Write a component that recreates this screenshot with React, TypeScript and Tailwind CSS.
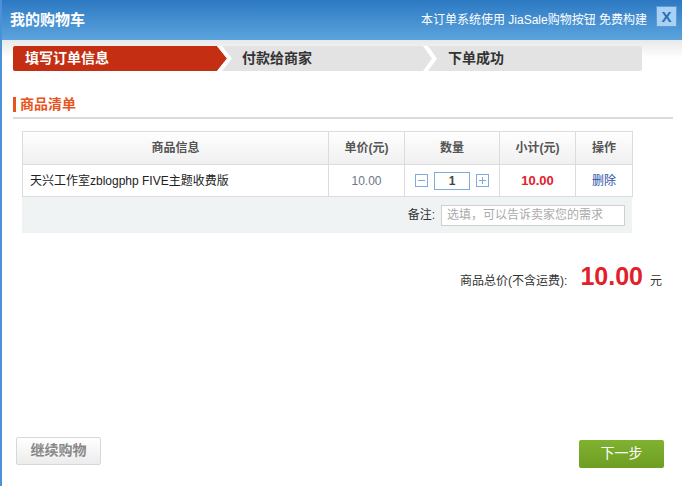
import React from "react";

const StepBar = () => {
  return (
    <div className="relative ml-[11px] h-[25px] w-[629px]">
      <svg
        className="absolute inset-0"
        width={629}
        height={25}
        viewBox="0 0 629 25"
      >
        <rect x={0} y={0} width={629} height={25} rx={2} fill="#e3e3e3" />
        <path d="M2 0 H204 L214 12.5 L204 25 H2 Q0 25 0 23 V2 Q0 0 2 0 Z" fill="#c42f14" />
        <polygon points="204,0 209,0 219,12.5 209,25 204,25 214,12.5" fill="#ffffff" />
        <polygon points="410,0 415,0 424,12.5 415,25 410,25 419,12.5" fill="#ffffff" />
      </svg>
      <div className="relative flex h-full items-center text-[14px] font-bold">
        <span className="w-[229px] pl-[12px] text-white">填写订单信息</span>
        <span className="w-[206px] text-[#333]">付款给商家</span>
        <span className="text-[#333]">下单成功</span>
      </div>
    </div>
  );
};

const QtyBox = ({ sign }: { sign: "-" | "+" }) => (
  <span className="flex h-[13px] w-[13px] items-center justify-center border border-[#7eaadc] bg-white">
    <svg width={9} height={9} viewBox="0 0 9 9">
      <line x1={1} y1={4.5} x2={8} y2={4.5} stroke="#7eaadc" strokeWidth={1} />
      {sign === "+" && (
        <line x1={4.5} y1={1} x2={4.5} y2={8} stroke="#7eaadc" strokeWidth={1} />
      )}
    </svg>
  </span>
);

export default function App() {
  return (
    <div className="h-[486px] w-[682px] overflow-hidden border-l-2 border-[#4a92d8] bg-white font-['Liberation_Sans','Noto_Sans_CJK_SC',sans-serif] text-[12px] text-[#333]">
      {/* header */}
      <div className="flex h-[40px] items-center justify-between bg-gradient-to-b from-[#2c79c2] to-[#5ca4de] pl-[8px] pr-[5px]">
        <span className="text-[15px] font-bold text-white">我的购物车</span>
        <div className="flex items-center gap-[9px]">
          <span className="text-[12px] text-white">本订单系统使用 JiaSale购物按钮 免费构建</span>
          <span className="mb-[7px] flex h-[21px] w-[21px] items-center justify-center border border-[#5b9bd9] bg-[#a9d1f5] text-[15px] font-bold leading-none text-[#2a6db2]">
            X
          </span>
        </div>
      </div>

      {/* content */}
      <div className="bg-gradient-to-b from-[#e8e8e8] to-white to-[18px] pt-[6px]">
        <StepBar />

        <div className="ml-[11px] mt-[26px] flex h-[15px] items-center">
          <span className="h-[15px] w-[3px] bg-[#e8541e]" />
          <span className="ml-[4px] text-[14px] font-bold text-[#e8541e]">商品清单</span>
        </div>
        <div className="ml-[11px] mt-[5px] h-[2px] w-[660px] bg-[#dadada]" />

        <div className="ml-[20px] mt-[12px] w-[610px]">
          <table className="w-[610px] table-fixed border-collapse">
            <colgroup>
              <col className="w-[306px]" />
              <col className="w-[76px]" />
              <col className="w-[95px]" />
              <col className="w-[76px]" />
              <col className="w-[57px]" />
            </colgroup>
            <thead>
              <tr className="h-[33px] bg-gradient-to-b from-white to-[#efefef] text-[12px] font-bold text-[#555]">
                <th className="border border-[#dcdcdc]">商品信息</th>
                <th className="border border-[#dcdcdc]">单价(元)</th>
                <th className="border border-[#dcdcdc]">数量</th>
                <th className="border border-[#dcdcdc]">小计(元)</th>
                <th className="border border-[#dcdcdc]">操作</th>
              </tr>
            </thead>
            <tbody>
              <tr className="h-[32px]">
                <td className="border border-[#dcdcdc] pl-[7px] text-[#222]">
                  天兴工作室zblogphp FIVE主题收费版
                </td>
                <td className="border border-[#dcdcdc] text-center text-[#6a7789]">10.00</td>
                <td className="border border-[#dcdcdc]">
                  <div className="flex items-center justify-center gap-[6px]">
                    <QtyBox sign="-" />
                    <span className="flex h-[18px] w-[36px] items-center justify-center border border-[#7eaadc] font-bold text-[#444]">
                      1
                    </span>
                    <QtyBox sign="+" />
                  </div>
                </td>
                <td className="border border-[#dcdcdc] text-center text-[13px] font-bold text-[#e3202a]">10.00</td>
                <td className="border border-[#dcdcdc] text-center text-[#2a52a8]">删除</td>
              </tr>
            </tbody>
          </table>
          <div className="flex h-[36px] items-center justify-end bg-[#f0f3f4] pr-[7px]">
            <span className="text-[#333]">备注:</span>
            <span className="ml-[6px] flex h-[21px] w-[184px] items-center border border-[#cfcfcf] bg-white pl-[5px] text-[#aaa]">
              选填，可以告诉卖家您的需求
            </span>
          </div>
        </div>

        <div className="mt-[25px] flex items-baseline justify-end pr-[20px]">
          <span className="text-[12px] text-[#333]">商品总价(不含运费):</span>
          <span className="ml-[13px] text-[25px] font-bold text-[#e3202a]">10.00</span>
          <span className="ml-[7px] text-[12px] text-[#333]">元</span>
        </div>

        <div className="mt-[141px] flex items-start justify-between pl-[14px] pr-[18px]">
          <span className="flex h-[28px] w-[85px] items-center justify-center rounded-[2px] border border-[#d8d8d8] bg-gradient-to-b from-white to-[#ececec] text-[14px] font-bold text-[#888]">
            继续购物
          </span>
          <span className="mt-[3px] flex h-[28px] w-[85px] items-center justify-center rounded-[2px] bg-gradient-to-b from-[#80b231] to-[#6e9e22] text-[14px] text-white">
            下一步
          </span>
        </div>
      </div>
    </div>
  );
}
